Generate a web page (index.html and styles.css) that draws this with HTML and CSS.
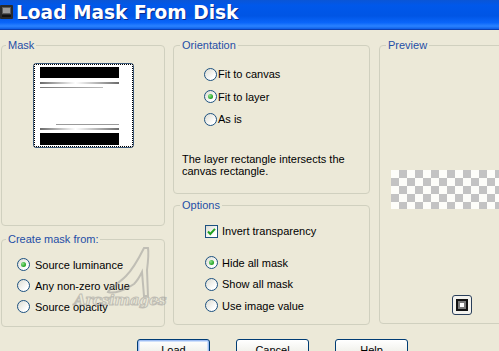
FILE: index.html
```html
<!DOCTYPE html>
<html>
<head>
<meta charset="utf-8">
<title>Load Mask From Disk</title>
<link rel="stylesheet" href="styles.css">
</head>
<body>
<div class="window">
  <div class="titlebar">
    <svg class="app-icon" width="13" height="14" viewBox="0 0 13 14">
      <rect x="0" y="0" width="13" height="14" rx="1" fill="#2a2a2a"/>
      <rect x="2" y="2" width="9" height="7" fill="#5a5a5a"/>
      <rect x="3" y="3" width="7" height="5" fill="#9a9a9a"/>
      <rect x="2" y="10" width="9" height="2" fill="#111"/>
    </svg>
    <span class="title">Load Mask From Disk</span>
  </div>

  <div class="client">
    <div class="col col-left">
      <fieldset class="group mask-group">
        <legend>Mask</legend>
        <div class="thumb">
          <div class="focus">
            <svg width="97" height="81" viewBox="0 0 97 81">
              <defs>
                <linearGradient id="fade" x1="0" x2="1">
                  <stop offset="0" stop-color="#6a6a6a"/>
                  <stop offset="0.45" stop-color="#ffffff"/>
                  <stop offset="1" stop-color="#6a6a6a"/>
                </linearGradient>
                <linearGradient id="fadeL" x1="0" x2="1">
                  <stop offset="0" stop-color="#777"/>
                  <stop offset="1" stop-color="#bbb"/>
                </linearGradient>
              </defs>
              <rect width="97" height="81" fill="#fff"/>
              <rect x="5" y="2" width="79" height="11" fill="#000"/>
              <rect x="5" y="17" width="79" height="2" fill="url(#fade)"/>
              <rect x="5" y="22" width="63" height="1" fill="url(#fadeL)"/>
              <rect x="21" y="59" width="63" height="1" fill="#9a9a9a"/>
              <rect x="5" y="63" width="79" height="2" fill="url(#fade)"/>
              <rect x="5" y="68" width="79" height="12" fill="#000"/>
            </svg>
          </div>
        </div>
      </fieldset>

      <fieldset class="group source-group">
        <legend>Create mask from:</legend>
        <div class="inner">
          <div class="opt"><span class="radio on"></span>Source luminance</div>
          <div class="opt"><span class="radio"></span>Any non-zero value</div>
          <div class="opt"><span class="radio"></span>Source opacity</div>
        </div>
      </fieldset>
    </div>

    <div class="col col-mid">
      <fieldset class="group orient-group">
        <legend>Orientation</legend>
        <div class="inner">
          <div class="opt"><span class="radio"></span>Fit to canvas</div>
          <div class="opt"><span class="radio on"></span>Fit to layer</div>
          <div class="opt"><span class="radio"></span>As is</div>
        </div>
        <p class="note">The layer rectangle intersects the canvas rectangle.</p>
      </fieldset>

      <fieldset class="group options-group">
        <legend>Options</legend>
        <div class="inner">
          <div class="opt check-row">
            <span class="check">
              <svg width="11" height="11" viewBox="0 0 11 11"><path d="M2 5.5 L4.3 8 L9 2.8" fill="none" stroke="#21a121" stroke-width="2"/></svg>
            </span>Invert transparency
          </div>
          <div class="radios">
            <div class="opt"><span class="radio on"></span>Hide all mask</div>
            <div class="opt"><span class="radio"></span>Show all mask</div>
            <div class="opt"><span class="radio"></span>Use image value</div>
          </div>
        </div>
      </fieldset>
    </div>

    <div class="col col-right">
      <fieldset class="group preview-group">
        <legend>Preview</legend>
        <div class="checker"></div>
        <div class="mini-btn"><span class="mini-glyph"></span></div>
      </fieldset>
    </div>
  </div>

  <div class="buttons">
    <button class="btn default">Load</button>
    <button class="btn">Cancel</button>
    <button class="btn">Help</button>
  </div>

  <div class="watermark">
    <svg width="60" height="56" viewBox="0 0 60 56">
      <path d="M40 2 C36 10 30 22 22 30 C14 38 6 42 4 46 C10 48 22 44 30 38 C34 34 36 30 38 26 L40 50 L44 50 L43 24 C44 16 45 8 44 2 Z" fill="none" stroke="#8c8c8c" stroke-width="2"/>
    </svg>
    <span class="wm-text">Arcsimages</span>
  </div>
</div>
</body>
</html>
```

FILE: styles.css
```css
html, body { margin:0; padding:0; }
body
{
  background:#ece9d8;
  font: 11px "Liberation Sans", Arial, sans-serif;
  color:#000;
  overflow:hidden;
}

.window
{
  position:relative;
  width:499px;
  height:351px;
  overflow:hidden;
  display:flex;
  flex-direction:column;
}

/* xp style caption */
.titlebar
{
  flex:none;
  height:29px;
  border-bottom:1px solid #0a3fb4;
  background:linear-gradient(#0a55d6 0%, #0058ea 18%, #0055e5 55%, #0a66fa 78%, #2a82ff 90%, #0d5ee6 100%);
  display:flex;
  align-items:flex-start;
}
.app-icon { margin:5px 3px 0 0; flex:none; }
.title
{
  margin-top:2px;
  font:bold 18.6px/22px "DejaVu Sans", sans-serif;
  color:#fff;
  text-shadow:1px 1px 0 #0b2a8a;
  white-space:nowrap;
}

.client
{
  display:flex;
  align-items:flex-start;
  padding:8px 0 0 1px;
}
.col { display:flex; flex-direction:column; flex:none; }
.col-left { width:164px; gap:6px; }
.col-mid { width:197px; margin-left:8px; gap:4px; }
.col-right { width:150px; margin-left:9px; }

fieldset.group
{
  margin:0;
  padding:0;
  min-width:0;
  box-sizing:border-box;
  border:1px solid #d0d0bf;
  border-radius:4px;
}
fieldset.group > legend
{
  padding:0 2px;
  margin-left:6px;
  line-height:14px;
  color:#1f4ea6;
}
fieldset.mask-group > legend, fieldset.source-group > legend { margin-left:4px; }

fieldset.mask-group { height:188px; }
fieldset.source-group { height:95px; padding-top:8px; }
fieldset.orient-group { height:156px; padding-top:11px; }
fieldset.options-group { height:127px; padding-top:8px; }
fieldset.preview-group { height:286px; }

.source-group .inner { padding-left:15px; }
.orient-group .inner { padding-left:30px; }
.options-group .inner { padding-left:31px; }

/* radio / check rows */
.opt
{
  display:flex;
  align-items:center;
  height:21px;
  white-space:nowrap;
}
.orient-group .opt { height:22.5px; }
.radio
{
  position:relative;
  flex:none;
  width:13px;
  height:13px;
  box-sizing:border-box;
  border:1px solid #1c5180;
  border-radius:50%;
  background:linear-gradient(135deg, #dcdcd2, #fff 75%);
  margin-right:5px;
}
.orient-group .radio { margin-right:1px; }
.options-group .radio { margin-right:4px; }
.radio.on::after
{
  content:"";
  position:absolute;
  left:3px;
  top:3px;
  width:5px;
  height:5px;
  border-radius:50%;
  background:radial-gradient(circle at 35% 35%, #8ee28e, #21a121 70%);
}

.check
{
  flex:none;
  width:13px;
  height:13px;
  box-sizing:border-box;
  border:1px solid #1c5180;
  background:linear-gradient(135deg, #dcdcd2, #fff 75%);
  margin-right:4px;
}
.check svg { display:block; }
.check-row { height:22px; }
.radios { margin-top:10px; }
.radios .opt { height:21.5px; }

.note
{
  margin:22px 0 0 8px;
  width:180px;
  line-height:12px;
}

/* mask thumbnail */
.thumb
{
  width:101px;
  height:85px;
  box-sizing:border-box;
  margin:11px 0 0 31px;
  border:1px solid #3c5876;
  border-radius:3px;
  background:#fff;
}
.focus
{
  border:1px dotted #000;
}
.focus svg { display:block; }

/* preview */
.checker
{
  margin:118px 0 0 11px;
  height:39px;
  background:repeating-conic-gradient(#c3c3c3 0 25%, #fdfdf9 0 50%) 0 0 / 16px 16px;
}
.mini-btn
{
  width:20px;
  height:20px;
  box-sizing:border-box;
  margin:86px 0 0 72px;
  border:1px solid #2a3f5a;
  border-radius:3px;
  background:#f4f3ee;
  display:flex;
  align-items:center;
  justify-content:center;
}
.mini-glyph
{
  width:12px;
  height:12px;
  box-sizing:border-box;
  border:2px solid #111;
  background:#fff;
  box-shadow:inset 0 0 0 2px #7a7a7a;
}

/* dialog buttons */
.buttons
{
  display:flex;
  gap:26px;
  padding-left:137px;
  margin-top:12px;
}
.btn
{
  width:73px;
  height:23px;
  flex:none;
  box-sizing:border-box;
  padding:3px 0 0;
  border:1px solid #003c74;
  border-radius:3px;
  background:linear-gradient(#fff, #f0f0ea 60%, #e3e2da);
  font:11px/14px "Liberation Sans", Arial, sans-serif;
  color:#000;
  display:flex;
  justify-content:center;
  align-items:flex-start;
}
.btn.default { box-shadow:inset 0 0 0 1px #9dbcf2, inset 0 0 0 2px #cfe0fb; }

/* faint stamp over the dialog */
.watermark
{
  position:absolute;
  left:74px;
  top:246px;
  width:90px;
  height:70px;
  pointer-events:none;
  opacity:.45;
}
.watermark svg { position:absolute; left:30px; top:0; }
.wm-text
{
  position:absolute;
  left:0;
  top:44px;
  font:italic bold 15px/20px "DejaVu Serif", serif;
  letter-spacing:-0.5px;
  color:transparent;
  -webkit-text-stroke:1px #8a8a8a;
  white-space:nowrap;
}
```
